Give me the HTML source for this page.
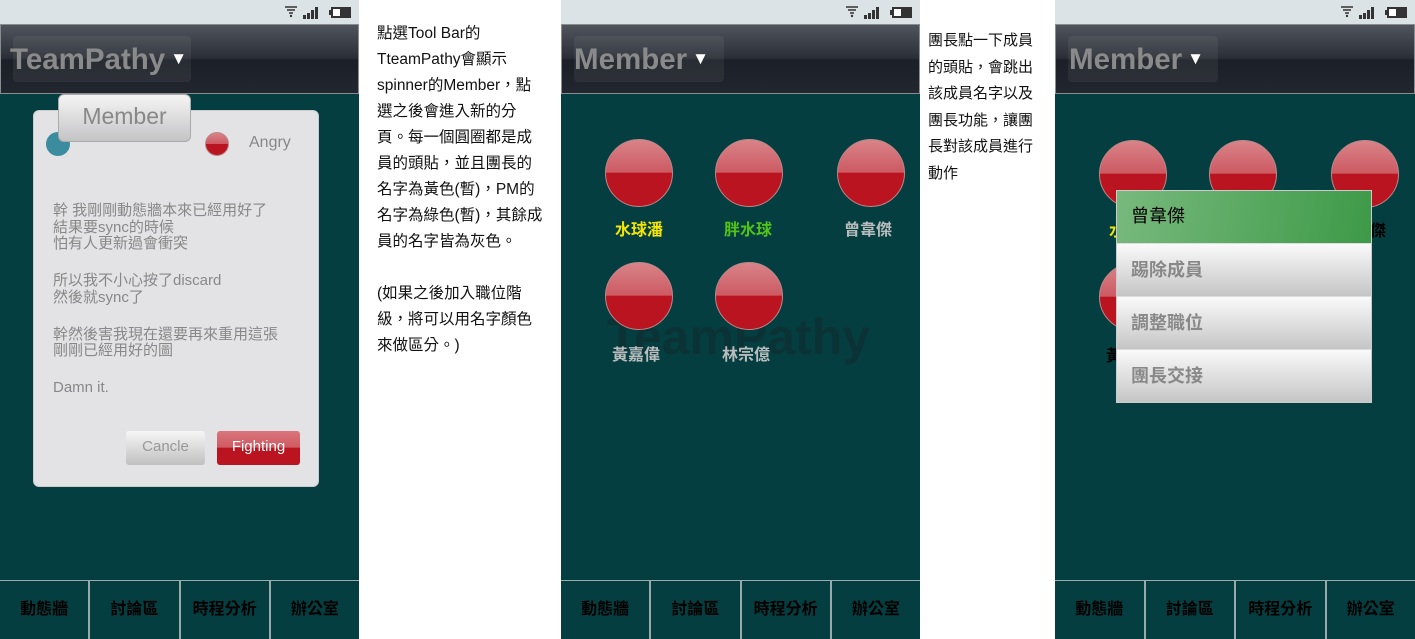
<!DOCTYPE html>
<html><head><meta charset="utf-8"><style>
*{margin:0;padding:0;box-sizing:border-box}
body{width:1415px;height:639px;background:#fff;position:relative;overflow:hidden;font-family:"Liberation Sans","Noto Sans CJK TC",sans-serif}
.ph{position:absolute;top:0;height:639px;background:#053e40;overflow:hidden}
.sb{position:absolute;left:0;right:0;top:0;height:24px;background:#dce3e6}
.tb{position:absolute;left:0;right:0;top:24px;height:70px;background:linear-gradient(#50545c,#2b3038 48%,#1b1f27 52%,#22262e);border:1px solid #8a8d90}
.sp{position:absolute;left:12px;top:11px;height:46px;border-radius:4px;background:rgba(255,255,255,0.06)}
.tt{position:absolute;left:10px;top:37px;white-space:nowrap}
.tt span{font-size:29.5px;font-weight:bold;color:#8a8a8a;line-height:46px}
.tt i{font-style:normal;color:#fff;font-size:17px;margin-left:5px;position:relative;top:-5px}
.tabs{position:absolute;left:0;right:0;top:580px;height:59px;border-top:1px solid #9aa;display:flex}
.tabs div{flex:1;border-left:2px solid #9aa;text-align:center;line-height:57px;font-size:16px;font-weight:bold;color:#000}
.tabs div:first-child{border-left:none}
.ball{position:absolute;width:68px;height:68px;border-radius:50%;border:1px solid #b88;background:linear-gradient(#d88388,#cd5a63 49%,#b9141f 50%,#b9141f)}
.nm{position:absolute;width:90px;text-align:center;font-size:16px;font-weight:bold;color:#b9bcbc}
.icons{position:absolute;right:6px;top:4px;height:16px;font-size:12px;color:#222}
.txt{position:absolute;font-size:15.5px;color:#111;line-height:26px}
.row{height:53px;border-top:1px solid #ddd;background:linear-gradient(#fafafa,#c5c5c5);font-size:18px;font-weight:bold;color:#888;padding-left:14px;line-height:52px}
.dl p{margin-bottom:20px}
</style></head><body>

<div class="ph" style="left:0;width:359px">
 <div class="sb"><svg class="icons" width="70" height="16" viewBox="0 0 70 16"><path d="M2 3h12M4 6h8M6 9h4" stroke="#333" stroke-width="1.6"/><circle cx="8" cy="12" r="1.2" fill="#333"/><rect x="20" y="11" width="3" height="4" fill="#333"/><rect x="24" y="9" width="3" height="6" fill="#333"/><rect x="28" y="6" width="3" height="9" fill="#333"/><rect x="32" y="3" width="3" height="12" fill="#333"/><rect x="48" y="3" width="20" height="11" fill="#333"/><rect x="46" y="6" width="2" height="5" fill="#333"/><rect x="50" y="5" width="7" height="7" fill="#fff"/></svg></div>
 <div class="tb"><div class="sp" style="width:178px"></div></div>
 <div class="tt"><span>TeamPathy</span><i>▼</i></div>
 <div style="position:absolute;left:33px;top:110px;width:286px;height:377px;background:#e3e3e6;border-radius:6px;border:1px solid #ccc"></div>
 <div style="position:absolute;left:46px;top:132px;width:24px;height:24px;border-radius:50%;background:#3b8c9e"></div>
 <div style="position:absolute;left:58px;top:94px;width:133px;height:48px;border-radius:6px;border:1px solid #aaa;background:linear-gradient(#f5f5f5,#c4c4c6);text-align:center;line-height:42px;font-size:23px;color:#888">Member</div>
 <div class="ball" style="left:205px;top:132px;width:24px;height:24px"></div>
 <div style="position:absolute;left:249px;top:134px;font-size:16px;color:#888">Angry</div>
 <div class="dl" style="position:absolute;left:53px;top:203px;font-size:15px;color:#888;line-height:16.7px">
  <p>幹 我剛剛動態牆本來已經用好了<br>結果要sync的時候<br>怕有人更新過會衝突</p>
  <p>所以我不小心按了discard<br>然後就sync了</p>
  <p>幹然後害我現在還要再來重用這張<br>剛剛已經用好的圖</p>
  <p>Damn it.</p></div>
 <div style="position:absolute;left:126px;top:431px;width:79px;height:34px;border-radius:3px;background:linear-gradient(#f6f6f6,#c0c0c0);text-align:center;line-height:32px;font-size:15px;color:#999">Cancle</div>
 <div style="position:absolute;left:217px;top:431px;width:83px;height:34px;border-radius:3px;background:linear-gradient(#d9767c,#cf5a62 48%,#b9141f 50%,#b9141f);text-align:center;line-height:32px;font-size:15px;color:#fff">Fighting</div>
 <div class="tabs"><div>動態牆</div><div>討論區</div><div>時程分析</div><div>辦公室</div></div>
</div>

<div class="txt" style="left:377px;top:21px;width:182px">點選Tool Bar的<br>TteamPathy會顯示<br>spinner的Member，點<br>選之後會進入新的分<br>頁。每一個圓圈都是成<br>員的頭貼，並且團長的<br>名字為黃色(暫)，PM的<br>名字為綠色(暫)，其餘成<br>員的名字皆為灰色。<br><br>(如果之後加入職位階<br>級，將可以用名字顏色<br>來做區分。)</div>

<div class="ph" style="left:561px;width:359px">
 <div class="sb"><svg class="icons" width="70" height="16" viewBox="0 0 70 16"><path d="M2 3h12M4 6h8M6 9h4" stroke="#333" stroke-width="1.6"/><circle cx="8" cy="12" r="1.2" fill="#333"/><rect x="20" y="11" width="3" height="4" fill="#333"/><rect x="24" y="9" width="3" height="6" fill="#333"/><rect x="28" y="6" width="3" height="9" fill="#333"/><rect x="32" y="3" width="3" height="12" fill="#333"/><rect x="48" y="3" width="20" height="11" fill="#333"/><rect x="46" y="6" width="2" height="5" fill="#333"/><rect x="50" y="5" width="7" height="7" fill="#fff"/></svg></div>
 <div class="tb"><div class="sp" style="width:150px"></div></div>
 <div class="tt" style="left:13px"><span>Member</span><i>▼</i></div>
 <div style="position:absolute;left:46px;top:308px;font-size:50px;font-weight:bold;color:#0b3336">TeamPathy</div>
 <div class="ball" style="left:44px;top:139px"></div><div class="ball" style="left:154px;top:139px"></div><div class="ball" style="left:276px;top:139px"></div>
 <div class="ball" style="left:44px;top:262px"></div><div class="ball" style="left:154px;top:262px"></div>
 <div class="nm" style="left:33px;top:216px;color:#f4e600">水球潘</div><div class="nm" style="left:142px;top:216px;color:#52c418">胖水球</div><div class="nm" style="left:262px;top:216px">曾韋傑</div>
 <div class="nm" style="left:30px;top:341px">黃嘉偉</div><div class="nm" style="left:140px;top:341px">林宗億</div>
 <div class="tabs"><div>動態牆</div><div>討論區</div><div>時程分析</div><div>辦公室</div></div>
</div>

<div class="txt" style="left:928px;top:28px;width:114px;font-size:15px;line-height:26.5px">團長點一下成員的頭貼，會跳出該成員名字以及團長功能，讓團長對該成員進行動作</div>

<div class="ph" style="left:1055px;width:360px">
 <div class="sb"><svg class="icons" width="70" height="16" viewBox="0 0 70 16"><path d="M2 3h12M4 6h8M6 9h4" stroke="#333" stroke-width="1.6"/><circle cx="8" cy="12" r="1.2" fill="#333"/><rect x="20" y="11" width="3" height="4" fill="#333"/><rect x="24" y="9" width="3" height="6" fill="#333"/><rect x="28" y="6" width="3" height="9" fill="#333"/><rect x="32" y="3" width="3" height="12" fill="#333"/><rect x="48" y="3" width="20" height="11" fill="#333"/><rect x="46" y="6" width="2" height="5" fill="#333"/><rect x="50" y="5" width="7" height="7" fill="#fff"/></svg></div>
 <div class="tb"><div class="sp" style="width:150px"></div></div>
 <div class="tt" style="left:14px"><span>Member</span><i>▼</i></div>
 <div class="ball" style="left:44px;top:140px"></div><div class="ball" style="left:154px;top:140px"></div><div class="ball" style="left:276px;top:140px"></div>
 <div class="ball" style="left:44px;top:263px"></div>
 <div class="nm" style="left:33px;top:217px;color:#f4e600">水球潘</div><div class="nm" style="left:262px;top:217px;color:#000">曾韋傑</div>
 <div class="nm" style="left:30px;top:342px;color:#000">黃嘉偉</div>
 <div style="position:absolute;left:61px;top:190px;width:256px;border:1px solid #ccc">
  <div style="height:52px;background:linear-gradient(100deg,#78b97d,#3d9a48);font-size:18px;color:#000;padding-left:14px;line-height:50px">曾韋傑</div>
  <div class="row">踢除成員</div><div class="row">調整職位</div><div class="row">團長交接</div>
 </div>
 <div class="tabs"><div>動態牆</div><div>討論區</div><div>時程分析</div><div>辦公室</div></div>
</div>
</body></html>
